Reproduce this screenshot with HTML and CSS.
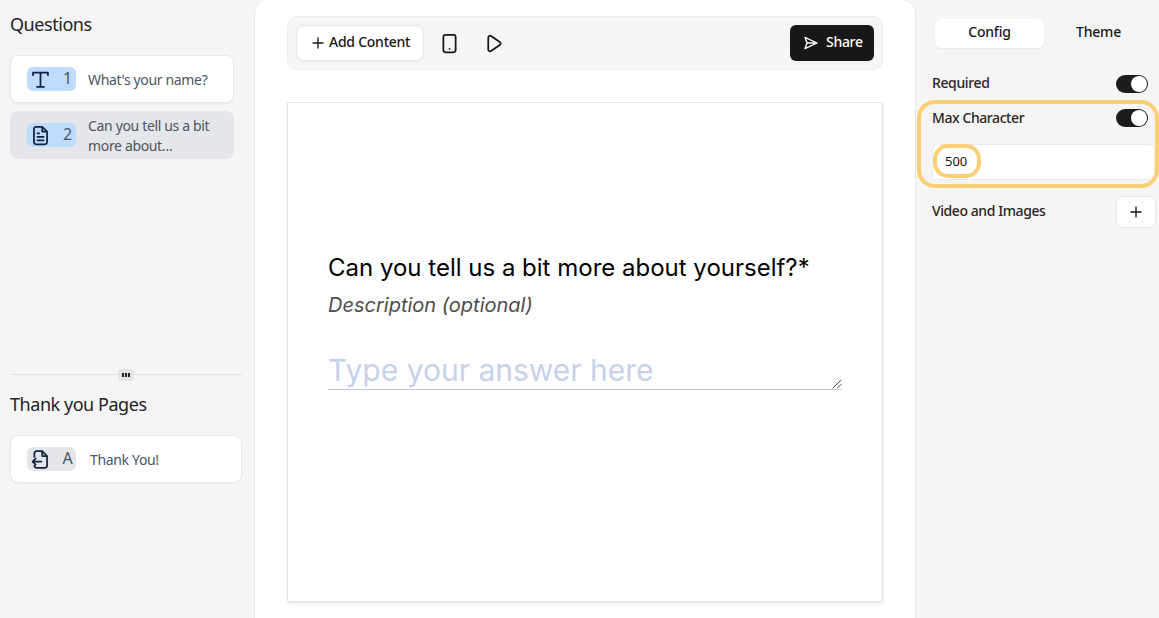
FILE: index.html
```html
<!DOCTYPE html>
<html lang="en">
<head>
<meta charset="utf-8">
<title>Form builder</title>
<link rel="stylesheet" href="styles.css">
</head>
<body>
<div class="app">
  <aside class="left">
    <section class="questions">
      <h2 class="heading">Questions</h2>
      <div class="q-list">
        <div class="q-card">
          <span class="badge blue">
            <svg class="ic" viewBox="0 0 24 24"><path d="M3.500 7V4h17v3M12 4v16.500M8 20.500h8"/></svg>
            <span class="num">1</span>
          </span>
          <span class="q-text">What's your name?</span>
        </div>
        <div class="q-card active">
          <span class="badge blue">
            <svg class="ic" viewBox="0 0 24 24"><path d="M14 2H7a2.500 2.500 0 0 0-2.500 2.500v15A2.500 2.500 0 0 0 7 22h10a2.500 2.500 0 0 0 2.500-2.500V7.500zM14 2v5.500h5.500M8.500 9.500h2M8.500 13.500h7M8.500 17.500h7"/></svg>
            <span class="num">2</span>
          </span>
          <span class="q-text">Can you tell us a bit<br>more about…</span>
        </div>
      </div>
    </section>
    <div class="splitter"><span class="grip"><i></i><i></i><i></i></span></div>
    <section class="thanks">
      <h2 class="heading">Thank you Pages</h2>
      <div class="q-card wide">
        <span class="badge grey">
          <svg class="ic" viewBox="0 0 24 24"><path d="M5 9V5a2.500 2.500 0 0 1 2.500-2.500H14L19.500 8v11a2.500 2.500 0 0 1-2.500 2.500H7.500A2.500 2.500 0 0 1 5 19M14 2.500V8h5.500M13 14.500H3M6.500 11l-3.500 3.500L6.500 18"/></svg>
          <span class="num">A</span>
        </span>
        <span class="q-text">Thank You!</span>
      </div>
    </section>
  </aside>

  <main class="center">
    <div class="toolbar">
      <button class="add-btn">
        <svg class="ic-sm" viewBox="0 0 24 24"><path d="M12 4.500v15M4.500 12h15"/></svg>
        <span class="btn-text">Add Content</span>
      </button>
      <span class="tool-ic">
        <svg class="ic" viewBox="0 0 24 24"><rect x="5" y="2" width="14" height="20" rx="2.500"/><path d="M12 18h.01"/></svg>
      </span>
      <span class="tool-ic">
        <svg class="ic" viewBox="0 0 24 24"><path d="M6 5.200c0-1.700 1.800-2.700 3.200-1.800l10 6.800c1.300.8 1.300 2.800 0 3.600l-10 6.800c-1.400.9-3.200-.1-3.200-1.800z"/></svg>
      </span>
      <button class="share-btn">
        <svg class="ic-sm" viewBox="0 0 24 24"><path d="M3 3.500 21 12 3 20.500 6 12zM6 12h15"/></svg>
        <span class="btn-text">Share</span>
      </button>
    </div>
    <div class="form-card">
      <h1 class="form-title">Can you tell us a bit more about yourself?*</h1>
      <p class="form-desc">Description (optional)</p>
      <div class="answer">
        <span class="placeholder">Type your answer here</span>
        <svg class="resize" viewBox="0 0 10 10"><path d="M1 9 9 1M5.500 9 9 5.500"/></svg>
      </div>
    </div>
  </main>

  <aside class="right">
    <div class="tabs">
      <span class="tab on">Config</span>
      <span class="tab">Theme</span>
    </div>
    <div class="row first">
      <span class="label">Required</span>
      <span class="toggle"></span>
    </div>
    <div class="group">
      <div class="row">
        <span class="label tight">Max Character</span>
        <span class="toggle"></span>
      </div>
      <div class="input">500<span class="ring"></span></div>
      <span class="group-ring"></span>
    </div>
    <div class="row media">
      <span class="label tight">Video and Images</span>
      <button class="plus">
        <svg class="ic-sm" viewBox="0 0 24 24"><path d="M12 4.500v15M4.500 12h15"/></svg>
      </button>
    </div>
  </aside>
</div>
</body>
</html>
```
FILE: styles.css
```css
* { box-sizing: border-box; }
html, body { margin: 0; height: 100%; }
body {
  background: #f5f5f5;
  color: #171717;
  font-family: "Noto Sans", "Open Sans", sans-serif;
  overflow: hidden;
}
.app {
  display: grid;
  grid-template-columns: 254px 662px 243px;
  height: 618px;
}
svg { fill: none; stroke: currentColor; stroke-linecap: round; stroke-linejoin: round; }
button { font: inherit; cursor: pointer; }

/* Left column */
.left { display: flex; flex-direction: column; padding: 0 12px 0 10px; }
.questions { height: 374px; }
.heading {
  margin: 0;
  font-size: 18px;
  font-weight: 400;
  line-height: 24px;
  letter-spacing: -0.45px;
  color: #1f2328;
}
.questions .heading { padding-top: 12px; }
.q-list { display: flex; flex-direction: column; gap: 8px; margin-top: 19px; }
.q-card {
  display: flex;
  align-items: center;
  gap: 12px;
  width: 224px;
  height: 48px;
  padding-left: 16px;
  background: #fff;
  border: 1px solid #e8e8e8;
  border-radius: 8px;
  box-shadow: 0 1px 2px rgba(0, 0, 0, .04);
}
.q-card.active { background: #e4e6ea; border-color: #e4e6ea; box-shadow: none; }
.q-card.wide { width: 232px; gap: 14px; margin-top: 19px; }
.badge {
  display: flex;
  align-items: center;
  justify-content: space-between;
  flex: none;
  width: 49px;
  height: 24px;
  padding: 0 0 0 3px;
  border-radius: 6px;
  color: #12233f;
}
.badge.blue { background: #bfdbfe; }
.badge.grey { background: #e4e6ea; }
.ic { width: 21px; height: 21px; stroke-width: 2; flex: none; }
.ic-sm { width: 16px; height: 16px; stroke-width: 2; flex: none; }
.num { font-size: 16px; line-height: 20px; padding-bottom: 2px; color: #475569; width: 17px; text-align: center; }
.q-text {
  padding-top: 2px;
  font-size: 14px;
  line-height: 20px;
  letter-spacing: -0.34px;
  color: #4b5563;
}
.splitter {
  display: flex;
  justify-content: center;
  height: 1px;
  background: #e2e2e2;
  overflow: visible;
}
.grip {
  display: flex;
  align-items: center;
  justify-content: center;
  gap: 1px;
  flex: none;
  width: 16px;
  height: 12px;
  margin-top: -5px;
  background: #e4e4e4;
  border-radius: 4px;
}
.grip i { width: 2px; height: 4px; background: #222; }
.thanks .heading { padding-top: 17px; }

/* Center column */
.center {
  padding: 16px 32px 0 32px;
  background: #fff;
  border-left: 1px solid #e5e5e5;
  border-right: 1px solid #e5e5e5;
  border-radius: 14px 14px 0 0;
}
.toolbar {
  display: flex;
  align-items: center;
  height: 54px;
  padding: 0 8px;
  background: #f5f5f5;
  border: 1px solid #ececec;
  border-radius: 10px;
}
.btn-text { padding-bottom: 3px; }
.add-btn {
  display: flex;
  align-items: center;
  gap: 3px;
  width: 128px;
  height: 36px;
  padding: 0 0 0 13px;
  background: #fff;
  border: 1px solid #e8e8e8;
  border-radius: 8px;
  color: #171717;
  font-size: 14px;
  font-weight: 500;
  letter-spacing: -0.25px;
  box-shadow: 0 1px 2px rgba(0, 0, 0, .04);
}
.tool-ic { display: flex; justify-content: center; width: 44px; color: #171717; }
.add-btn + .tool-ic { margin-left: 3px; }
.share-btn {
  display: flex;
  align-items: center;
  gap: 7px;
  width: 84px;
  height: 36px;
  margin-left: auto;
  padding: 0 0 0 13px;
  background: #171717;
  border: 0;
  border-radius: 6px;
  color: #fff;
  font-size: 14px;
  font-weight: 500;
  letter-spacing: -0.3px;
}
.form-card {
  display: flex;
  flex-direction: column;
  height: 500px;
  margin-top: 32px;
  padding: 149px 40px 0 40px;
  background: #fff;
  border: 1px solid #e5e5e5;
  box-shadow: 0 1px 3px rgba(0, 0, 0, .1);
}
.form-title {
  margin: 0;
  font-family: Inter, "Liberation Sans", sans-serif;
  font-size: 24px;
  font-weight: 400;
  line-height: 31px;
  color: #000;
}
.form-desc {
  margin: 8px 0 0;
  font-family: Inter, "Liberation Sans", sans-serif;
  font-size: 20px;
  font-style: italic;
  line-height: 28px;
  color: #4d4d4d;
}
.answer {
  position: relative;
  width: 514px;
  height: 41px;
  margin-top: 30px;
  border-bottom: 1px solid #b9c8dc;
}
.placeholder {
  display: block;
  font-family: Inter, "Liberation Sans", sans-serif;
  font-size: 30px;
  line-height: 42px;
  color: #c6d2ea;
}
.resize {
  position: absolute;
  right: 0;
  bottom: 0;
  width: 10px;
  height: 10px;
  stroke-width: 1;
  color: #444;
}

/* Right column */
.right { padding: 19px 0 0 16px; }
.tabs { display: flex; width: 218px; margin-left: 3px; }
.tab {
  flex: 1;
  height: 29px;
  font-size: 14px;
  font-weight: 500;
  line-height: 26px;
  letter-spacing: -0.2px;
  text-align: center;
  color: #171717;
}
.tab.on { background: #fff; border-radius: 6px; box-shadow: 0 1px 2px rgba(0, 0, 0, .06); }
.row {
  display: flex;
  align-items: center;
  justify-content: space-between;
  height: 18px;
  padding-right: 11px;
}
.row.first { margin-top: 27px; }
.label { font-size: 14px; font-weight: 500; letter-spacing: -0.38px; color: #262626; padding-bottom: 3px; }
.label.tight { letter-spacing: -0.42px; padding-bottom: 1px; }
.toggle {
  position: relative;
  width: 32px;
  height: 18px;
  background: #1c1c1c;
  border-radius: 9px;
}
.toggle::after {
  content: "";
  position: absolute;
  top: 1px;
  right: 1px;
  width: 16px;
  height: 16px;
  background: #fff;
  border-radius: 50%;
}
.group { position: relative; margin-top: 16px; }
.group-ring {
  position: absolute;
  left: -15px;
  top: -9px;
  width: 242px;
  height: 88px;
  border: 4px solid #fbcf75;
  border-radius: 18px;
  pointer-events: none;
}
.input {
  position: relative;
  width: 223px;
  height: 36px;
  margin-top: 17px;
  padding-left: 12px;
  background: #fff;
  border: 1px solid #ececec;
  border-radius: 6px;
  font-size: 13px;
  line-height: 32px;
  color: #171717;
}
.ring {
  position: absolute;
  left: 0;
  top: -1px;
  width: 48px;
  height: 34px;
  border: 4px solid #fbcf75;
  border-radius: 15px;
}
.row.media { height: 32px; margin-top: 16px; padding-right: 3px; }
.row.media .label { padding-bottom: 3px; }
.plus {
  display: flex;
  align-items: center;
  justify-content: center;
  width: 40px;
  height: 32px;
  padding: 0;
  background: #fff;
  border: 1px solid #e8e8e8;
  border-radius: 6px;
  color: #171717;
}
```
